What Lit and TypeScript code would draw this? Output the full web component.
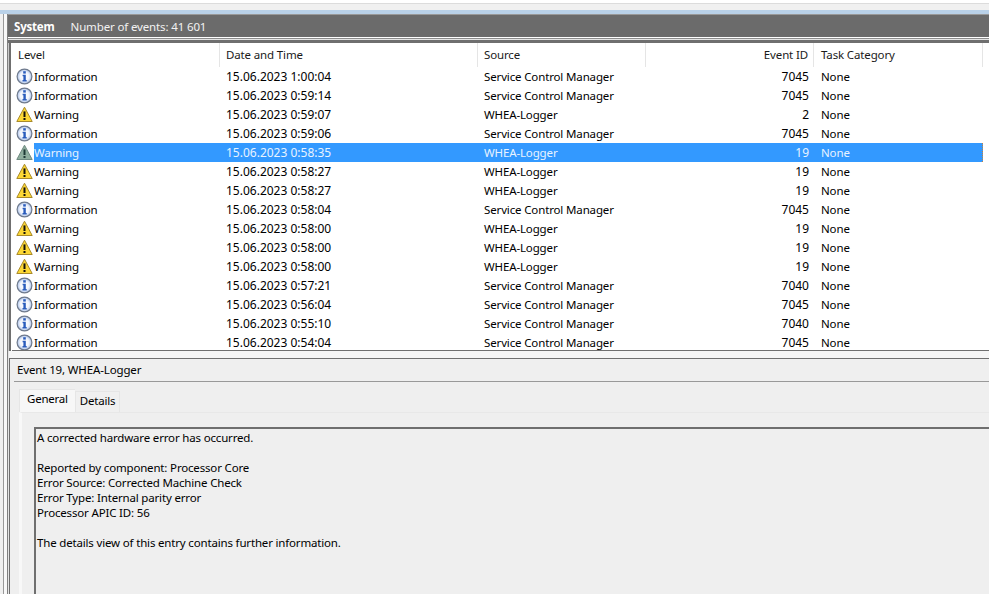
import { LitElement, css, html, svg } from 'lit'
import { customElement } from 'lit/decorators.js'
import { map } from 'lit/directives/map.js'
import { classMap } from 'lit/directives/class-map.js'

type Row = [string, string, string, string]

const INFO = 'Information'
const WARN = 'Warning'
const SCM = 'Service Control Manager'
const WHEA = 'WHEA-Logger'

const rows: Row[] = [
    [INFO, '15.06.2023 1:00:04', SCM, '7045'],
    [INFO, '15.06.2023 0:59:14', SCM, '7045'],
    [WARN, '15.06.2023 0:59:07', WHEA, '2'],
    [INFO, '15.06.2023 0:59:06', SCM, '7045'],
    [WARN, '15.06.2023 0:58:35', WHEA, '19'],
    [WARN, '15.06.2023 0:58:27', WHEA, '19'],
    [WARN, '15.06.2023 0:58:27', WHEA, '19'],
    [INFO, '15.06.2023 0:58:04', SCM, '7045'],
    [WARN, '15.06.2023 0:58:00', WHEA, '19'],
    [WARN, '15.06.2023 0:58:00', WHEA, '19'],
    [WARN, '15.06.2023 0:58:00', WHEA, '19'],
    [INFO, '15.06.2023 0:57:21', SCM, '7040'],
    [INFO, '15.06.2023 0:56:04', SCM, '7045'],
    [INFO, '15.06.2023 0:55:10', SCM, '7040'],
    [INFO, '15.06.2023 0:54:04', SCM, '7045'],
]
const SELECTED = 4

const infoIcon = svg`<svg class="icon" width="17" height="17" viewBox="0 0 17 17">
    <defs><radialGradient id="ig" cx="0.5" cy="0.5" r="0.5">
        <stop offset="0" stop-color="#ffffff"/><stop offset="0.6" stop-color="#f2f5fc"/><stop offset="1" stop-color="#a6bee8"/>
    </radialGradient></defs>
    <circle cx="8.5" cy="8.5" r="7.4" fill="url(#ig)" stroke="#6f7a8c" stroke-width="1.2"/>
    <rect x="7.2" y="3.2" width="2.6" height="2.4" fill="#2a5cbc"/>
    <path d="M6.6 6.8h3.2v5.3h.9v1.4H6.5v-1.4h.9V8.2h-.8z" fill="#2a5cbc"/>
</svg>`

const warnIcon = (sel: boolean) => svg`<svg class="icon" width="17" height="17" viewBox="0 0 17 17">
    <path d="M8.5 1.2 16.2 15.5H.8z" fill="${sel ? '#8fae9e' : '#fcd734'}" stroke="${sel ? '#6f8a80' : '#a88a2a'}" stroke-width="1" stroke-linejoin="round"/>
    <rect x="7.5" y="5.4" width="2" height="5.6" fill="${sel ? '#1f3a36' : '#15120a'}"/>
    <rect x="7.5" y="12" width="2" height="2" fill="${sel ? '#1f3a36' : '#15120a'}"/>
</svg>`

@customElement('app-root')
export class AppRoot extends LitElement {
    static styles = css`
        :host {
            display: block;
            width: 989px;
            height: 594px;
            overflow: hidden;
            background: #f0f0f0;
            font-family: "Noto Sans", "Open Sans", sans-serif;
            font-size: 11.5px;
            letter-spacing: -0.14px;
            color: #000;
        }

        .topbar {
            height: 10px;
            box-sizing: border-box;
            padding-top: 3px;
            background: #fff;
        }
        .topbar div {
            height: 7px;
            background: #f0f0f0;
            border-top: 1px solid #dcdcdc;
            box-sizing: border-box;
        }
        .blue {
            height: 4px;
            background: #b9d1e8;
        }

        .body {
            display: flex;
            height: 580px;
        }
        .rail {
            width: 5px;
            margin-left: 3px;
            box-sizing: border-box;
            border-left: 1px solid #999;
            border-right: 1px solid #808080;
            background: #f8f8f8;
            flex: none;
        }
        .main {
            flex: 1;
            min-width: 0;
        }

        .title {
            height: 23px;
            box-sizing: border-box;
            background: #6b6b6b;
            border-top: 1px solid #999;
            color: #fff;
            display: flex;
            align-items: center;
            padding: 1px 0 0 6px;
            gap: 16px;
        }
        .title b {
            font-weight: 700;
            letter-spacing: -0.2px;
        }
        .title span {
            color: #f2f2f2;
        }

        .listframe {
            border-top: 1px solid #fff;
            height: 314px;
            box-sizing: border-box;
            display: flex;
            flex-direction: column;
        }
        .rule {
            height: 1px;
            flex: none;
            background: #8c8c8c;
        }
        .rule.light {
            background: #e4e4e4;
        }
        .rule.dark {
            height: 3px;
            background: #6f6f6f;
        }
        .listwrap {
            flex: 1;
            display: flex;
            min-height: 0;
        }
        .listleft {
            width: 4px;
            flex: none;
            box-sizing: border-box;
            background: #6f6f6f;
            border-left: 1px solid #c8c8c8;
            border-right: 1px solid #fff;
        }
        .list {
            flex: 1;
            background: #fff;
            overflow: hidden;
            border-bottom: 1px solid #6f6f6f;
        }

        .row, .head {
            display: grid;
            grid-template-columns: 208px 258px 168px 168px 169px;
            width: 971px;
        }
        .head {
            height: 24px;
        }
        .head div {
            height: 24px;
            line-height: 23px;
            padding-left: 6px;
            border-right: 1px solid #e5e5e5;
            box-sizing: border-box;
            color: #1a1a1a;
        }
        .head .num {
            text-align: right;
            padding-right: 5px;
        }
        .head .last {
            padding-left: 7px;
        }
        .row {
            height: 19px;
            line-height: 19px;
        }
        .row > div {
            padding-left: 6px;
            white-space: nowrap;
            box-sizing: border-box;
        }
        .row .level {
            display: flex;
            align-items: center;
            padding-left: 4px;
            gap: 1px;
        }
        .row .level span {
            flex: 1;
            height: 19px;
        }
        .icon {
            flex: none;
        }
        .row .date, .row .num {
            font-size: 12px;
            letter-spacing: 0;
        }
        .row .num {
            text-align: right;
            padding: 0 5px 0 0;
        }
        .row .last {
            padding-left: 7px;
        }
        .row.sel > div:not(.level), .row.sel .level span {
            background: #3399ff;
            color: #e8f3ff;
        }
        .row.sel .last {
            border-right: 1px dotted #c9823a;
        }

        .detail {
            height: 243px;
            overflow: hidden;
            background: #efefef;
            border-left: 1px solid #e4e4e4;
        }
        .gap {
            height: 7px;
            background: #f5f5f5;
        }
        .panel {
            border-left: 1px solid #6f6f6f;
            border-top: 1px solid #6f6f6f;
            height: 236px;
            box-sizing: border-box;
        }
        .dtitle {
            height: 22px;
            line-height: 21px;
            padding-left: 7px;
        }
        .drule {
            height: 1px;
            margin-left: 4px;
            background: #999;
        }
        .tabs {
            display: flex;
            align-items: flex-end;
            height: 30px;
            padding-left: 9px;
            box-sizing: border-box;
        }
        .tab {
            height: 20px;
            line-height: 18px;
            padding: 0 4px;
            background: #f0f0f0;
            border: 1px solid #e6e6e6;
            border-bottom: none;
            letter-spacing: -0.22px;
        }
        .tab.on {
            height: 22px;
            line-height: 17px;
            padding: 0 7px;
            background: #f7f7f7;
            border-right: none;
        }
        .page {
            border-top: 1px solid #e8e8e8;
            border-left: 3px solid #f8f8f8;
            margin-left: 9px;
            padding: 14px 0 0 12px;
        }
        .msg {
            border-top: 2px solid #6f6f6f;
            border-left: 2px solid #6f6f6f;
            padding: 1px 0 0 1px;
            height: 200px;
            line-height: 15px;
            white-space: pre;
            letter-spacing: -0.17px;
        }
    `

    render() {
        return html`
            <div class="topbar"><div></div></div>
            <div class="blue"></div>
            <div class="body">
                <div class="rail"></div>
                <div class="main">
                    <div class="title"><b>System</b><span>Number of events: 41 601</span></div>
                    <div class="listframe">
                        <div class="rule"></div>
                        <div class="rule light"></div>
                        <div class="rule dark"></div>
                        <div class="listwrap">
                            <div class="listleft"></div>
                            <div class="list">
                                <div class="head">
                                    <div>Level</div>
                                    <div>Date and Time</div>
                                    <div>Source</div>
                                    <div class="num">Event ID</div>
                                    <div class="last">Task Category</div>
                                </div>
                                ${map(rows, (r, i) => html`
                                    <div class="row ${classMap({ sel: i === SELECTED })}">
                                        <div class="level">
                                            ${r[0] === INFO ? infoIcon : warnIcon(i === SELECTED)}
                                            <span>${r[0]}</span>
                                        </div>
                                        <div class="date">${r[1]}</div>
                                        <div>${r[2]}</div>
                                        <div class="num">${r[3]}</div>
                                        <div class="last">None</div>
                                    </div>
                                `)}
                            </div>
                        </div>
                    </div>
                    <div class="detail">
                        <div class="gap"></div>
                        <div class="panel">
                            <div class="dtitle">Event 19, WHEA-Logger</div>
                            <div class="drule"></div>
                            <div class="tabs">
                                <div class="tab on">General</div>
                                <div class="tab">Details</div>
                            </div>
                            <div class="page">
                                <div class="msg">A corrected hardware error has occurred.

Reported by component: Processor Core
Error Source: Corrected Machine Check
Error Type: Internal parity error
Processor APIC ID: 56

The details view of this entry contains further information.</div>
                            </div>
                        </div>
                    </div>
                </div>
            </div>
        `
    }
}
